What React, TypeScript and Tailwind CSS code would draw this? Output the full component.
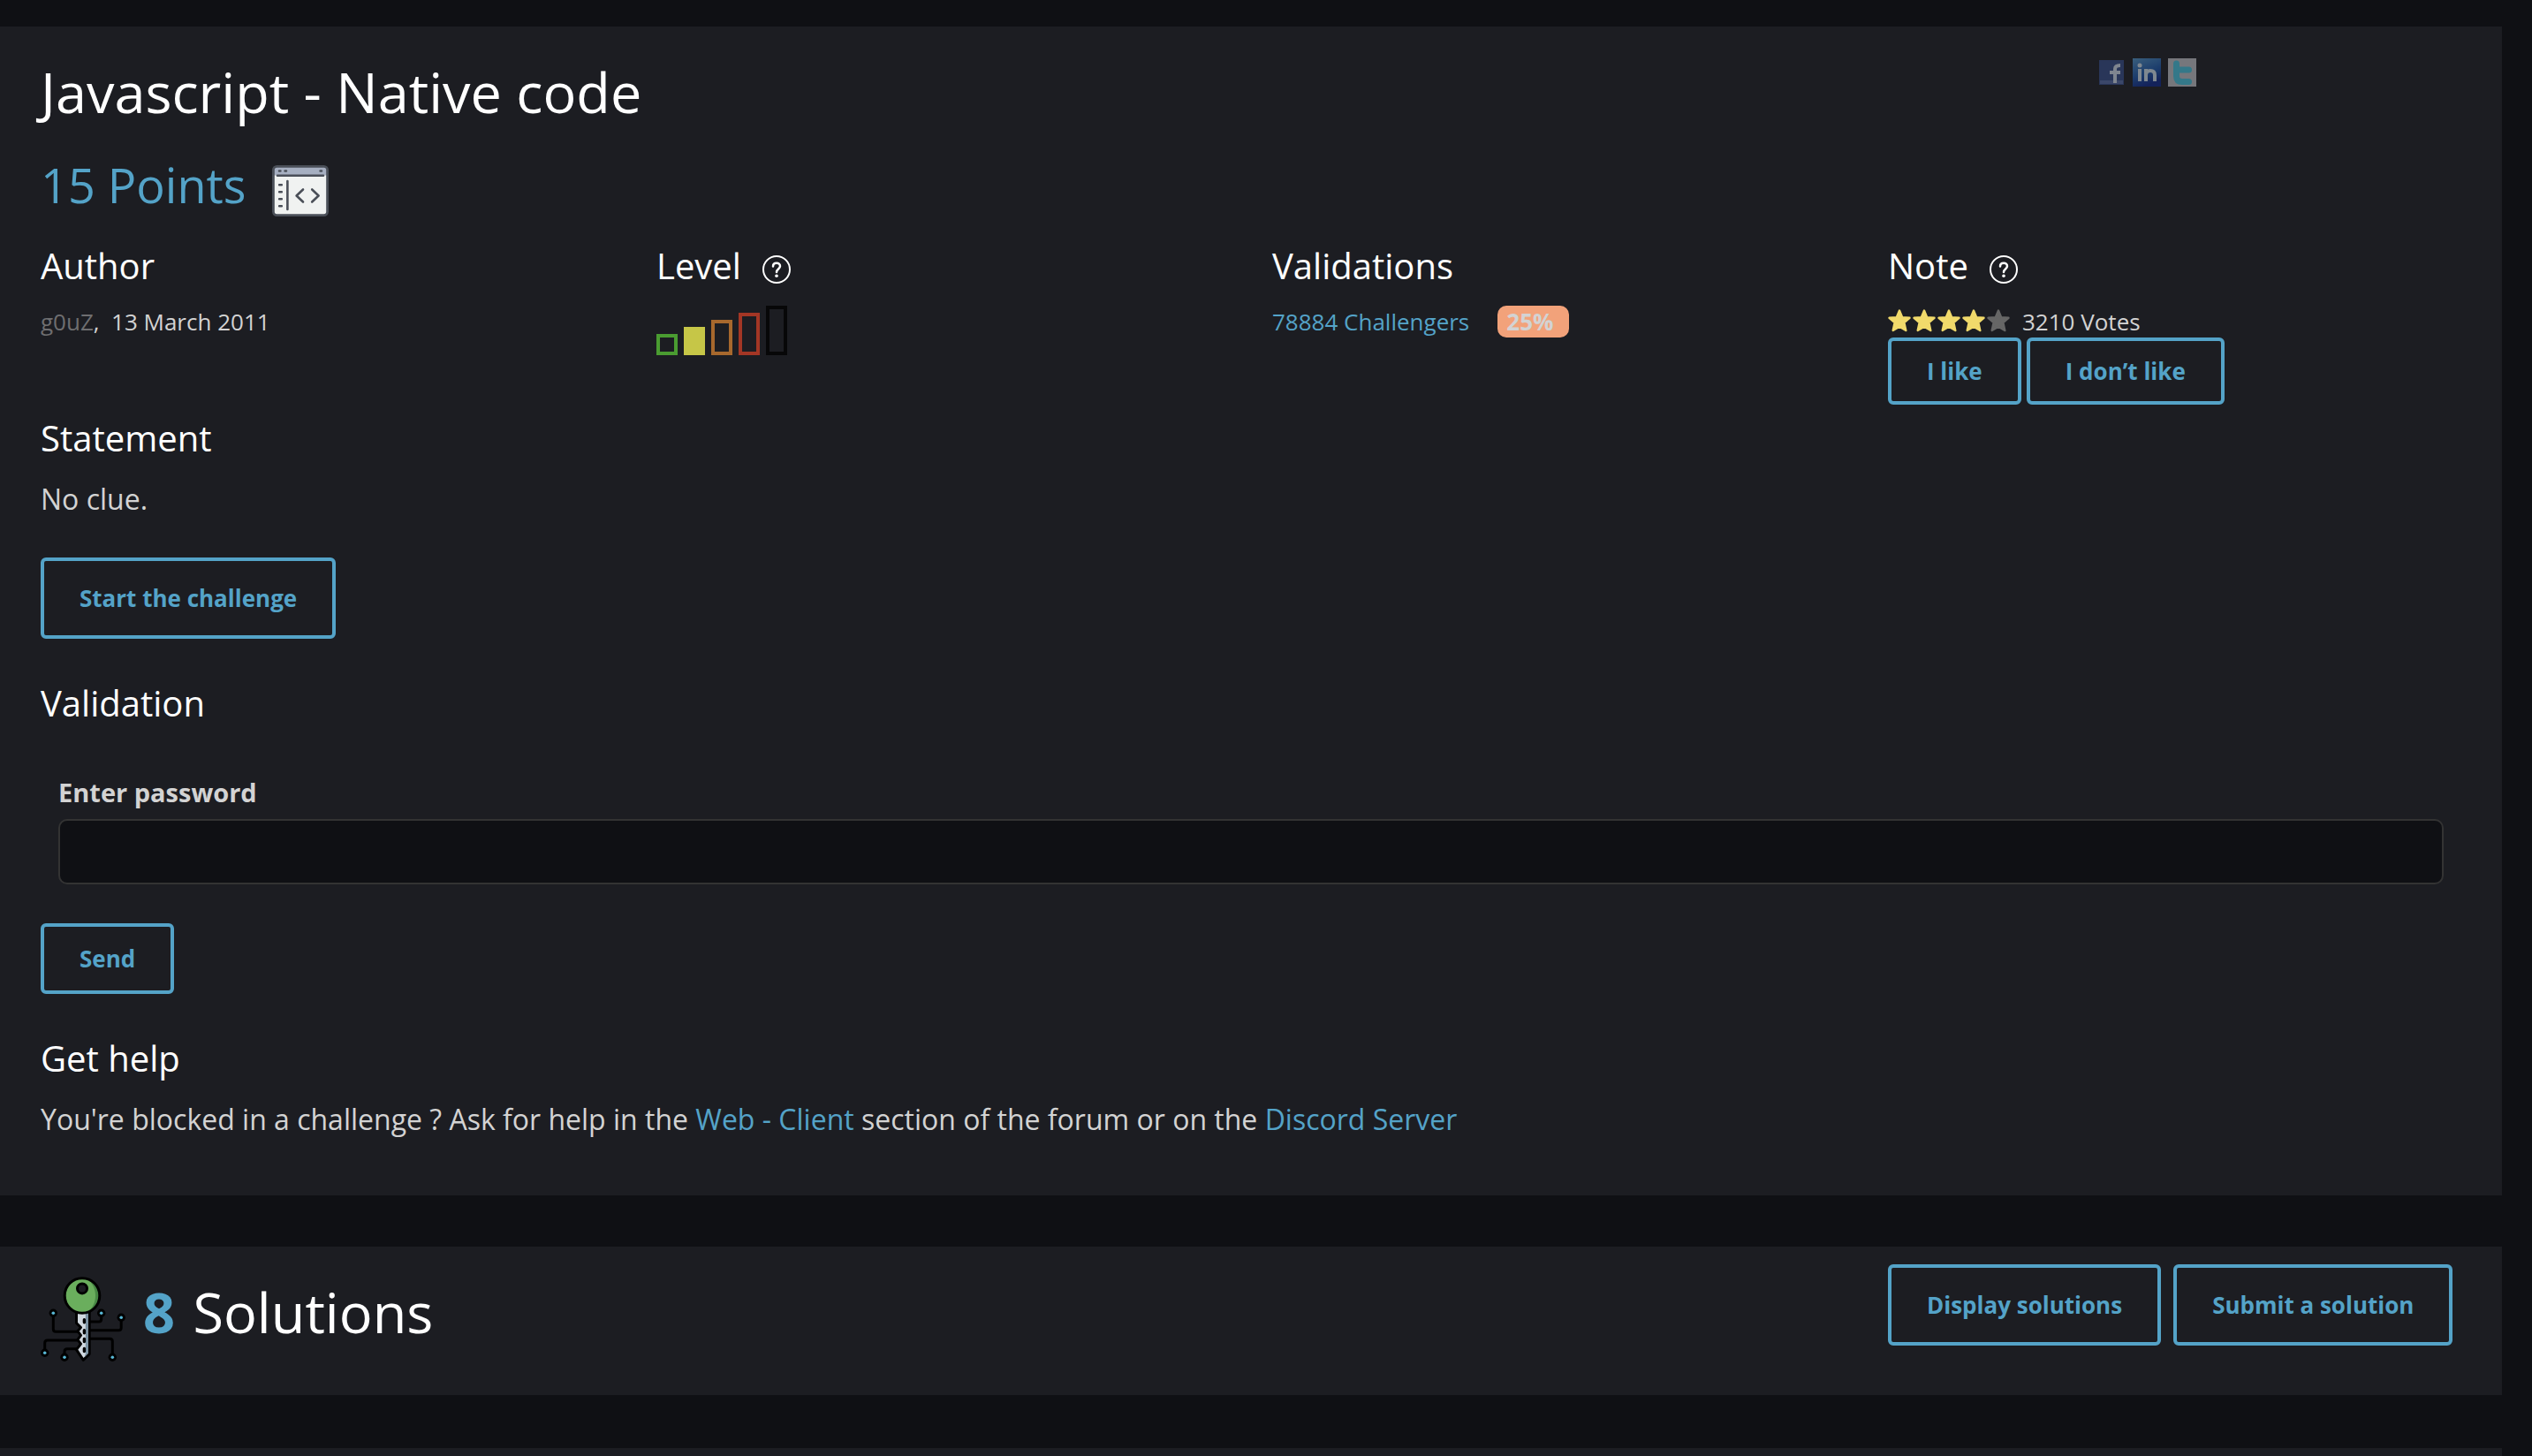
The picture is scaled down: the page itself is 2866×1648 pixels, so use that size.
import React from "react";

const heading = "text-[40px] leading-14 text-white";
const button =
  "inline-flex items-center justify-center rounded-md border-4 border-[#54a3c8] px-10 text-[26px] font-bold text-[#54a3c8] whitespace-nowrap";
const link = "text-[#54a3c8]";

function HelpIcon() {
  return (
    <svg viewBox="0 0 32 32" className="size-8" fill="none" stroke="#fff">
      <circle cx="16" cy="16" r="15" strokeWidth="2" />
      <path
        d="M12 12.400c0-2.300 1.700-3.700 4-3.700s4 1.500 4 3.600c0 3.100-4 3.300-4 6.700"
        strokeWidth="2.500"
        strokeLinecap="round"
      />
      <circle cx="16" cy="23.300" r="1.800" fill="#fff" stroke="none" />
    </svg>
  );
}

function CodeWindowIcon() {
  return (
    <svg viewBox="0 0 64 58" className="h-[58px] w-16" fill="none" strokeLinecap="round">
      <rect x="1.5" y="1.5" width="61" height="55" rx="4" fill="#f0f2f1" />
      <path d="M1.5 11.5V5.5a4 4 0 0 1 4-4h53a4 4 0 0 1 4 4v6z" fill="#a6afc1" />
      <rect x="1.4" y="1.4" width="61.2" height="55.2" rx="4" stroke="#4a4f58" strokeWidth="2.8" />
      <g stroke="#4a4f58" strokeWidth="2.6">
        <path d="M6 11.7h52M17.4 18v32" />
        <path d="M8.2 22.3h2.6M8.2 30.3h2.6M8.2 38.3h2.6M8.2 46.3h2.6M8 6.5h1.4M14.6 6.5H16M54.6 6.5H56" />
        <path d="M35 27.5l-7.4 7L35 41.5M45.2 27.5l7.4 7-7.4 7" strokeLinejoin="round" />
      </g>
    </svg>
  );
}

function Star({ filled }: { filled: boolean }) {
  return (
    <svg
      viewBox="0 0 28 26"
      className="h-[26px] w-7"
      fill={filled ? "#f1da6b" : "#666666"}
      stroke={filled ? "#f1da6b" : "#666666"}
      strokeWidth="2.4"
      strokeLinejoin="round"
    >
      <path d="M13 1.5l3.2 7.6 8.3.7-6.1 5.4 1.9 8.8L13 19.6 5.7 24l1.9-8.8-6.1-5.4 8.3-.7z" />
    </svg>
  );
}

function KeyIcon() {
  const nodes = [
    [14.3, 41.3],
    [4.7, 86.3],
    [27, 91.3],
    [68.7, 41.3],
    [91.2, 46.3],
    [81.3, 91.3],
  ];
  return (
    <svg viewBox="0 0 96 96" className="size-24" fill="none">
      <g stroke="#000" strokeWidth="3">
        <path d="M14.3 44v15.3q0 3 3 3H43" />
        <path d="M4.7 83v-8q0-3 3-3H43" />
        <path d="M27 88v-3.3q0-3 3-3h11" />
        <path d="M68.7 44v4q0 3-3 3H56" />
        <path d="M91.2 49v8.7q0 3-3 3H56" />
        <path d="M81.3 88V73.3q0-3-3-3H56" />
      </g>
      {nodes.map(([x, y]) => (
        <g key={`${x}-${y}`}>
          <circle cx={x} cy={y} r="4.7" fill="#000" />
          <circle cx={x} cy={y} r="1.8" fill="#58b8d6" />
        </g>
      ))}
      <path
        d="M40.5 40v12.5l5 5-3.6 4.2 3.6 4.6-3.6 5 3.6 4.800-5 6.600 7.800 11.600 6.900-6.700V40z"
        fill="#d1d9e0"
        stroke="#000"
        strokeWidth="3"
        strokeLinejoin="round"
      />
      <path d="M50.8 41h3v45.5l-4 4.4 1-4z" fill="#7b93a4" />
      <path
        d="M49.4 48.8v3M49.4 60.8v3M49.4 70.5v3M49.4 81.5v3"
        stroke="#000"
        strokeWidth="3.4"
        strokeLinecap="round"
      />
      <circle cx="47" cy="21.5" r="19.8" fill="#6aae5d" />
      <path d="M53 2.8a19.8 19.8 0 0 1 0 37.4c12-9 12-28 0-37.4z" fill="#478844" />
      <circle cx="47" cy="21.5" r="19.8" stroke="#000" strokeWidth="3" />
      <circle cx="47" cy="13.4" r="5.5" fill="#1c1d22" stroke="#000" strokeWidth="3" />
    </svg>
  );
}

function SocialLinks() {
  return (
    <div className="flex h-8 items-center gap-2">
      <a href="#facebook" aria-label="Facebook">
        <svg viewBox="0 0 32 32" className="size-8">
          <rect x="2" y="2" width="28" height="28" fill="#293659" />
          <path d="M3 25h26v4H3z" fill="#3b4769" />
          <path d="M20 28V12q0-4 6-4M14 16h12" fill="none" stroke="#7f858f" strokeWidth="4" />
        </svg>
      </a>
      <a href="#linkedin" aria-label="LinkedIn">
        <svg viewBox="0 0 32 32" className="size-8">
          <defs>
            <linearGradient id="inbg" x1="0" y1="0" x2="0.4" y2="1">
              <stop offset="0" stopColor="#3a5f7d" />
              <stop offset="0.6" stopColor="#1c3d6c" />
              <stop offset="1" stopColor="#13225a" />
            </linearGradient>
          </defs>
          <rect width="32" height="32" fill="url(#inbg)" />
          <path d="M8 12v14M15 26V12M15 19q0-5 5-5t5 5v7" fill="none" stroke="#7f8890" strokeWidth="4" />
          <circle cx="8" cy="8" r="2.500" fill="#7f8890" />
        </svg>
      </a>
      <a href="#twitter" aria-label="Twitter">
        <svg viewBox="0 0 32 32" className="size-8">
          <rect width="32" height="32" fill="#76777c" />
          <path
            d="M9.500 6v14q0 6.500 6.500 6.500h7.500M9.500 13h14"
            fill="none"
            stroke="#347889"
            strokeWidth="7"
            strokeLinecap="round"
          />
        </svg>
      </a>
    </div>
  );
}

const levels = [
  "h-6 border-[#4a9c31]",
  "h-8 border-[#c6c647] bg-[#c6c647]",
  "h-10 border-[#a7682d]",
  "h-12 border-[#a33625]",
  "h-14 border-[#070708]",
];

export default function App() {
  return (
    <div className="flex min-h-screen flex-col bg-[#0f1014] pt-[30px] pr-[34px] font-['Open_Sans','Noto_Sans',sans-serif] text-[#d3d3d3]">
      <main className="bg-[#1c1d22] pt-[34px] pb-[62px] pl-[46px]">
        <div className="-mr-0.5 grid grid-cols-4">
          <h1 className="col-span-3 text-[63px] leading-20 text-white">Javascript - Native code</h1>
          <div className="pl-[237px] pt-0.5">
            <SocialLinks />
          </div>
        </div>

        <div className="mt-[29px] flex items-end gap-[30px]">
          <h2 className="text-[54px] leading-18 text-[#54a3c8]">15 Points</h2>
          <CodeWindowIcon />
        </div>

        <div className="-mr-0.5 mt-7 grid grid-cols-4 text-[26px] leading-9">
          <section>
            <h3 className={heading}>Author</h3>
            <p className="mt-[17px]">
              <a href="#author" className="text-[#6e6e70]">
                g0uZ
              </a>
              ,&nbsp; 13 March 2011
            </p>
          </section>
          <section>
            <div className="flex items-center gap-6">
              <h3 className={heading}>Level</h3>
              <div className="pt-2">
                <HelpIcon />
              </div>
            </div>
            <div className="mt-[17px] flex items-end gap-[7px]">
              {levels.map((cls) => (
                <span key={cls} className={`w-6 border-4 ${cls}`} />
              ))}
            </div>
          </section>
          <section>
            <h3 className={heading}>Validations</h3>
            <div className="mt-[17px] flex items-center gap-8">
              <a href="#challengers" className={link}>
                78884 Challengers
              </a>
              <span className="rounded-[10px] bg-[#f2a27a] pr-[18px] pl-2.5 font-bold">25%</span>
            </div>
          </section>
          <section>
            <div className="flex items-center gap-6">
              <h3 className={heading}>Note</h3>
              <div className="pt-2">
                <HelpIcon />
              </div>
            </div>
            <div className="mt-[17px] flex items-center gap-3">
              <div className="flex pb-0.5">
                {[1, 2, 3, 4, 5].map((n) => (
                  <Star key={n} filled={n <= 4} />
                ))}
              </div>
              <span>3210 Votes</span>
            </div>
            <div className="flex gap-1.5">
              <button type="button" className={`${button} h-[76px]`}>
                I like
              </button>
              <button type="button" className={`${button} h-[76px]`}>
                I don’t like
              </button>
            </div>
          </section>
        </div>

        <h3 className={`${heading} mt-2.5`}>Statement</h3>
        <p className="mt-[17px] text-[32px] leading-12">No clue.</p>
        <a href="#start" className={`${button} mt-[42px] h-[92px]`}>
          Start the challenge
        </a>

        <h3 className={`${heading} mt-[45px]`}>Validation</h3>
        <form onSubmit={(e) => e.preventDefault()}>
          <div className="mt-[53px] mr-[66px] ml-5 flex flex-col gap-2.5">
            <label htmlFor="password" className="text-[29px] leading-10 font-bold">
              Enter password
            </label>
            <input
              id="password"
              type="text"
              className="h-[74px] w-full rounded-[10px] border-2 border-[#333333] bg-[#0f1014] px-4 text-[29px]"
            />
          </div>
          <button type="submit" className={`${button} mt-11 h-20`}>
            Send
          </button>
        </form>

        <h3 className={`${heading} mt-[45px]`}>Get help</h3>
        <p className="mt-[17px] text-[32px] leading-12">
          You're blocked in a challenge ? Ask for help in the{" "}
          <a href="#forum" className={link}>
            Web - Client
          </a>{" "}
          section of the forum or on the{" "}
          <a href="#discord" className={link}>
            Discord Server
          </a>
        </p>
      </main>

      <section className="mt-[58px] bg-[#1c1d22] pb-[38px] pl-[46px]">
        <div className="-mr-0.5 grid grid-cols-4">
          <div className="col-span-3 flex gap-5 pt-[34px]">
            <KeyIcon />
            <h2 className="text-[63px] leading-20 text-white">
              <span className="mr-1 font-bold text-[#54a3c8]">8</span> Solutions
            </h2>
          </div>
          <div className="flex items-start gap-3.5 pt-5">
            <a href="#display" className={`${button} h-[92px]`}>
              Display solutions
            </a>
            <a href="#submit" className={`${button} h-[92px]`}>
              Submit a solution
            </a>
          </div>
        </div>
      </section>

      <section className="mt-[60px] flex-1 bg-[#1c1d22]" />
    </div>
  );
}
